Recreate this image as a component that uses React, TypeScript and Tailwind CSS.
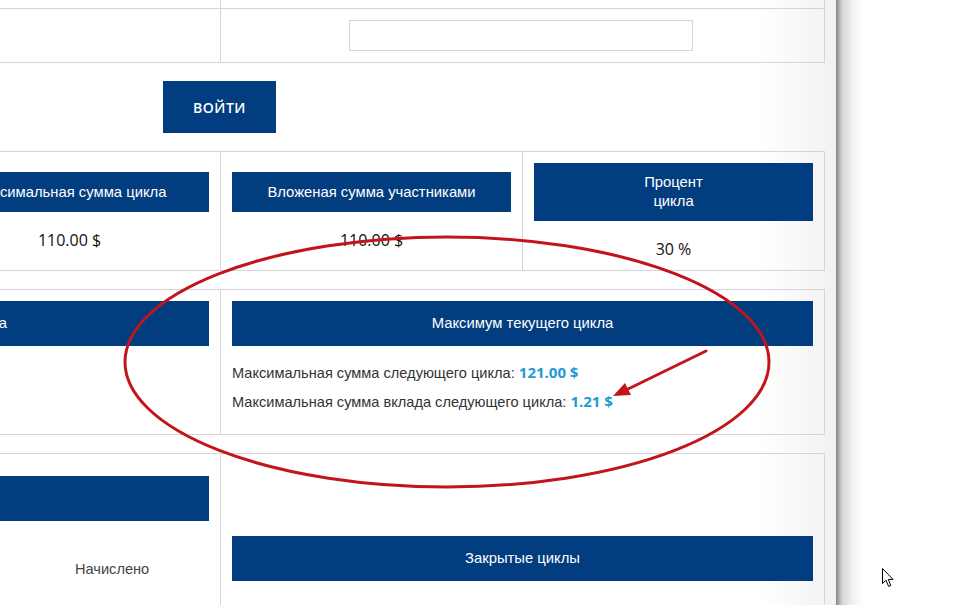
import React from 'react';

const line = 'border-[#d5d5d5]';

const Bar = ({ children, className = '' }: { children?: React.ReactNode; className?: string }) => (
  <div className={`flex items-center justify-center bg-[#023d80] text-center text-[14.8px] text-white ${className}`}>
    {children}
  </div>
);

const App = () => {
  return (
    <div className="relative flex h-[605px] w-[957px] overflow-hidden bg-white font-['Liberation_Sans',Arial,sans-serif]">
      {/* page */}
      <div className="relative h-full w-[836px] shrink-0 overflow-hidden bg-[linear-gradient(to_right,#ffffff_760px,#f1f1f1)]">
        <div className="ml-[-82px] w-[907px]">
          {/* login table */}
          <div className={`grid grid-cols-[303px_1fr] border-r ${line}`}>
            <div className={`h-[9px] border-r border-b ${line}`} />
            <div className={`h-[9px] border-b ${line}`} />
            <div className={`h-[54px] border-r border-b ${line}`} />
            <div className={`flex h-[54px] justify-center border-b pt-[11px] ${line}`}>
              <div className={`ml-[-3px] h-[31px] w-[344px] border bg-white ${line}`} />
            </div>
          </div>

          <div className="pl-[245px] pt-[18px]">
            <button className="h-[52px] w-[113px] bg-[#023d80] font-['Open_Sans',sans-serif] text-[14px] font-semibold tracking-[0.5px] text-white">
              ВОЙТИ
            </button>
          </div>

          {/* cycle stats */}
          <div className={`mt-[18px] flex h-[120px] border-y border-r ${line}`}>
            <div className={`flex w-[303px] flex-col justify-center border-r pl-[12px] pr-[11px] pt-[2px] ${line}`}>
              <Bar className="h-[40px]">Максимальная сумма цикла</Bar>
              <div className="mt-[16px] text-center font-['Open_Sans',sans-serif] text-[16px] font-medium leading-[24px] text-[#111]">110.00 $</div>
            </div>
            <div className={`flex w-[302px] flex-col justify-center border-r pl-[11px] pr-[11px] pt-[2px] ${line}`}>
              <Bar className="h-[40px]">Вложеная сумма участниками</Bar>
              <div className="mt-[16px] text-center font-['Open_Sans',sans-serif] text-[16px] font-medium leading-[24px] text-[#111]">110.00 $</div>
            </div>
            <div className="flex flex-1 flex-col justify-center pl-[11px] pr-[11px] pt-[2px]">
              <Bar className="h-[58px] leading-[19px]">
                Процент
                <br />
                цикла
              </Bar>
              <div className="mt-[16px] text-center font-['Open_Sans',sans-serif] text-[16px] font-medium leading-[24px] text-[#111]">30 %</div>
            </div>
          </div>

          {/* current cycle */}
          <div className={`mt-[18px] flex h-[146px] border-y border-r ${line}`}>
            <div className={`w-[303px] border-r pl-[12px] pr-[11px] pt-[11px] ${line}`}>
              <Bar className="h-[45px] justify-end overflow-hidden whitespace-nowrap pr-[202px]">Минимальная сумма</Bar>
            </div>
            <div className="flex-1 pl-[11px] pr-[11px] pt-[11px]">
              <Bar className="h-[45px]">Максимум текущего цикла</Bar>
              <div className="mt-[17px] flex flex-col gap-[10px] text-[14.6px] leading-[18px] text-[#333]">
                <p>
                  Максимальная сумма следующего цикла:{' '}
                  <span className="font-['Open_Sans',sans-serif] text-[15px] font-bold text-[#1f9ad5]">121.00 $</span>
                </p>
                <p>
                  Максимальная сумма вклада следующего цикла:{' '}
                  <span className="font-['Open_Sans',sans-serif] text-[15px] font-bold text-[#1f9ad5]">1.21 $</span>
                </p>
              </div>
            </div>
          </div>

          {/* history */}
          <div className={`mt-[18px] flex h-[200px] border-t border-r ${line}`}>
            <div className={`w-[303px] border-r pl-[12px] pr-[11px] pt-[22px] ${line}`}>
              <Bar className="h-[45px]" />
              <div className="mt-[39px] pl-[145px] text-[14.6px] leading-[18px] text-[#444]">Начислено</div>
            </div>
            <div className="flex-1 pl-[11px] pr-[11px] pt-[82px]">
              <Bar className="h-[45px]">Закрытые циклы</Bar>
            </div>
          </div>
        </div>
      </div>

      {/* window shadow */}
      <div className="h-full w-[28px] shrink-0 bg-[linear-gradient(to_right,#858585,#d4d4d4_22%,#f2f2f2_60%,#ffffff)]" />
      <div className="h-full flex-1 bg-white" />

      {/* annotation */}
      <svg className="pointer-events-none absolute left-0 top-0" width="957" height="605" viewBox="0 0 957 605">
        <ellipse cx="447" cy="362" rx="322" ry="125" fill="none" stroke="#c2151b" strokeWidth="3" />
        <line x1="706" y1="351" x2="624" y2="391" stroke="#c2151b" strokeWidth="3" strokeLinecap="round" />
        <polygon points="613,396 631,395 625,383" fill="#c2151b" />
      </svg>

      {/* mouse pointer */}
      <svg className="pointer-events-none absolute left-[882px] top-[568px]" width="13" height="20" viewBox="0 0 13 20">
        <path d="M0.5 0.5 L0.5 15.5 L4 12.2 L6.6 18.4 L8.8 17.5 L6.3 11.4 L11 11.4 Z" fill="#fff" stroke="#000" strokeWidth="1" strokeLinejoin="round" />
      </svg>
    </div>
  );
};

export default App;
